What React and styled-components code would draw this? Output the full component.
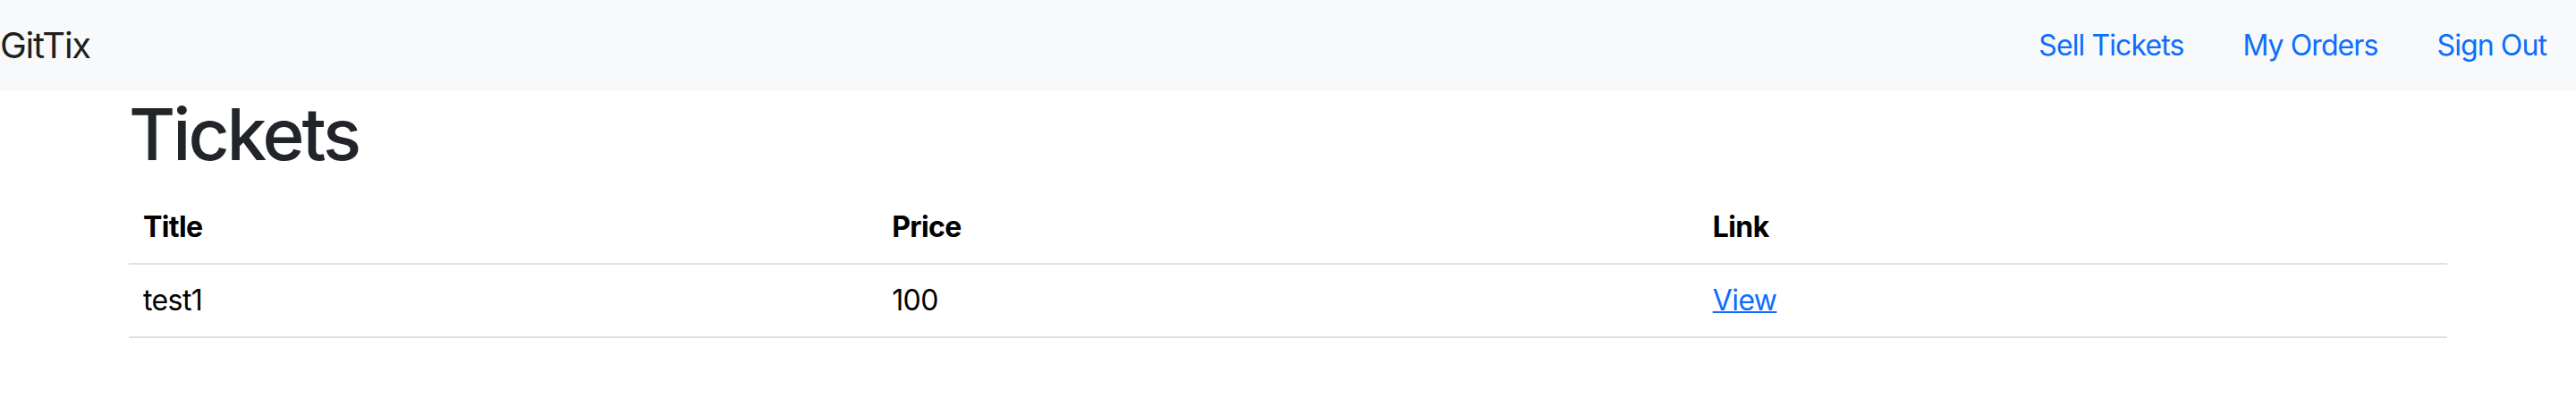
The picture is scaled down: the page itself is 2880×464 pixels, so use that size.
import React from "react";
import styled, { createGlobalStyle } from "styled-components";

const tickets = [{ id: 1, title: "test1", price: 100 }];

const columns = [
  { key: "title", label: "Title", width: "32.3%" },
  { key: "price", label: "Price", width: "35.4%" },
  { key: "link", label: "Link", width: "32.3%" },
];

function App() {
  return (
    <>
      <GlobalStyle />
      <Navbar>
        <Brand href="#">GitTix</Brand>
        <NavLinks>
          <NavLink href="#">Sell Tickets</NavLink>
          <NavLink href="#">My Orders</NavLink>
          <NavLink href="#">Sign Out</NavLink>
        </NavLinks>
      </Navbar>
      <Container>
        <Heading>Tickets</Heading>
        <Table>
          <thead>
            <tr>
              {columns.map((col) => (
                <HeadCell key={col.key} $width={col.width}>
                  {col.label}
                </HeadCell>
              ))}
            </tr>
          </thead>
          <tbody>
            {tickets.map((ticket) => (
              <tr key={ticket.id}>
                <Cell>{ticket.title}</Cell>
                <Cell>{ticket.price}</Cell>
                <Cell>
                  <ViewLink href="#">View</ViewLink>
                </Cell>
              </tr>
            ))}
          </tbody>
        </Table>
      </Container>
    </>
  );
}

export default App;

const GlobalStyle = createGlobalStyle`
  * {
    box-sizing: border-box;
  }
  body {
    margin: 0;
    background: #fff;
    color: #212529;
    font-family: Inter, "Noto Sans", "Liberation Sans", sans-serif;
  }
`;

const Navbar = styled.nav`
  display: flex;
  align-items: center;
  justify-content: space-between;
  height: 102px;
  background: #f8f9fa;
`;

const Brand = styled.a`
  font-size: 40px;
  line-height: 60px;
  color: rgba(0, 0, 0, 0.9);
  text-decoration: none;
  letter-spacing: -1.3px;
`;

const NavLinks = styled.div`
  display: flex;
  align-items: center;
  gap: 66px;
  padding-right: 33px;
`;

const NavLink = styled.a`
  font-size: 32px;
  line-height: 48px;
  color: #0d6efd;
  text-decoration: none;
  letter-spacing: -0.9px;
`;

const Container = styled.main`
  max-width: 2640px;
  margin: 0 auto;
  padding: 0 24px;
`;

const Heading = styled.h1`
  margin: 0 0 16px;
  font-size: 80px;
  line-height: 96px;
  font-weight: 500;
  color: #212529;
  letter-spacing: -3px;
`;

const Table = styled.table`
  width: 100%;
  border-collapse: collapse;
  table-layout: fixed;
  color: #000;
  font-size: 32px;
  line-height: 48px;
`;

const HeadCell = styled.th`
  width: ${(p) => p.$width};
  padding: 16px;
  text-align: left;
  font-weight: 700;
  border-bottom: 2px solid #dee2e6;
  letter-spacing: -0.6px;
`;

const Cell = styled.td`
  padding: 16px;
  border-bottom: 2px solid #dee2e6;
  letter-spacing: -0.6px;
`;

const ViewLink = styled.a`
  color: #0d6efd;
  text-decoration: underline;
  text-decoration-thickness: 2px;
`;
